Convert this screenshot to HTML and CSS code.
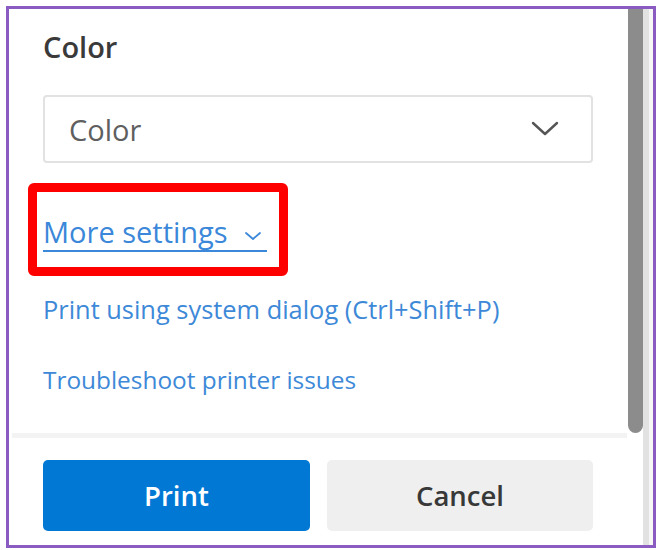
FILE: index.html
```html
<!DOCTYPE html>
<html lang="en">
<head>
<meta charset="utf-8">
<title>Print</title>
<link rel="stylesheet" href="styles.css">
</head>
<body>
  <div class="frame">
    <div class="scroll-area">
      <div class="content">
        <h2 class="label">Color</h2>
        <div class="select">
          <span class="select-value">Color</span>
          <svg class="select-chevron" width="28" height="16" viewBox="0 0 28 16" aria-hidden="true">
            <path d="M2 2 L14 13 L26 2" fill="none" stroke="#555" stroke-width="2.4" stroke-linecap="round" stroke-linejoin="round"/>
          </svg>
        </div>
        <div class="highlight">
          <a class="more-settings" href="#">More settings
            <svg class="small-chevron" width="18" height="10" viewBox="0 0 18 10" aria-hidden="true">
              <path d="M2 2 L9 8 L16 2" fill="none" stroke="#3b87d9" stroke-width="1.8" stroke-linecap="round" stroke-linejoin="round"/>
            </svg>
          </a>
        </div>
        <a class="link link-system" href="#">Print using system dialog (Ctrl+Shift+P)</a>
        <a class="link link-trouble" href="#">Troubleshoot printer issues</a>
      </div>
      <div class="scrollbar"><div class="thumb"></div></div>
    </div>
    <div class="separator"></div>
    <div class="footer">
      <button class="btn btn-primary" type="button">Print</button>
      <button class="btn btn-secondary" type="button">Cancel</button>
    </div>
  </div>
</body>
</html>
```

FILE: styles.css
```css
* { box-sizing: border-box; }
html, body { margin: 0; padding: 0; background: #ffffff; }
body {
  padding: 6px 0 0 6px;
  font-family: "Open Sans", "Noto Sans", sans-serif;
}
.frame {
  width: 650px;
  height: 542px;
  border: 3px solid #8a5cc2;
  background: #ffffff;
  display: flex;
  flex-direction: column;
  box-shadow: inset -4px 0 0 #f6f6f6, inset -10px 0 0 #e2e2e2;
}
.scroll-area {
  display: flex;
  height: 424px;
}
.content {
  width: 619px;
  padding: 0 0 0 34px;
  display: flex;
  flex-direction: column;
  background: #fff;
}
.label {
  margin: 20px 0 0 0;
  font-size: 29px;
  line-height: 36px;
  font-weight: 600;
  color: #3a3a3a;
}
.select {
  margin-top: 30px;
  width: 550px;
  height: 68px;
  border: 2px solid #e2e2e2;
  border-radius: 4px;
  display: flex;
  align-items: center;
  justify-content: space-between;
  padding: 0 32px 0 24px;
}
.select-value {
  font-size: 29px;
  color: #5f5f5f;
}
.select-chevron { display: block; }
.highlight {
  margin: 20px 0 0 -15px;
  width: 260px;
  height: 93px;
  border: 9px solid #ff0000;
  border-radius: 6px;
  padding: 22px 0 0 6px;
}
.more-settings {
  display: inline-flex;
  align-items: center;
  gap: 16px;
  font-size: 29px;
  line-height: 36px;
  color: #3b87d9;
  text-decoration: none;
  border-bottom: 2px solid #3b87d9;
  padding-right: 5px;
}
.small-chevron { display: block; margin-top: 8px; }
.link {
  line-height: 30px;
  color: #3d89d8;
  text-decoration: none;
  align-self: flex-start;
}
.link-system { margin-top: 18px; font-size: 25.4px; }
.link-trouble { margin-top: 41px; font-size: 24.4px; }
.scrollbar {
  width: 15px;
  height: 100%;
}
.thumb {
  width: 15px;
  height: 100%;
  background: #8c8c8c;
  border-radius: 0 0 8px 8px;
}
.separator {
  height: 5px;
  margin: 0 26px 0 3px;
  background: #f3f3f3;
}
.footer {
  display: flex;
  gap: 17px;
  padding: 22px 0 0 34px;
}
.btn {
  width: 267px;
  height: 71px;
  border: none;
  border-radius: 5px;
  font-family: "Open Sans", "Noto Sans", sans-serif;
  font-size: 27.5px;
  font-weight: 600;
  cursor: pointer;
}
.btn-primary {
  background: #0078d4;
  color: #ffffff;
}
.btn-secondary {
  width: 266px;
  background: #efefef;
  color: #383838;
}
```
